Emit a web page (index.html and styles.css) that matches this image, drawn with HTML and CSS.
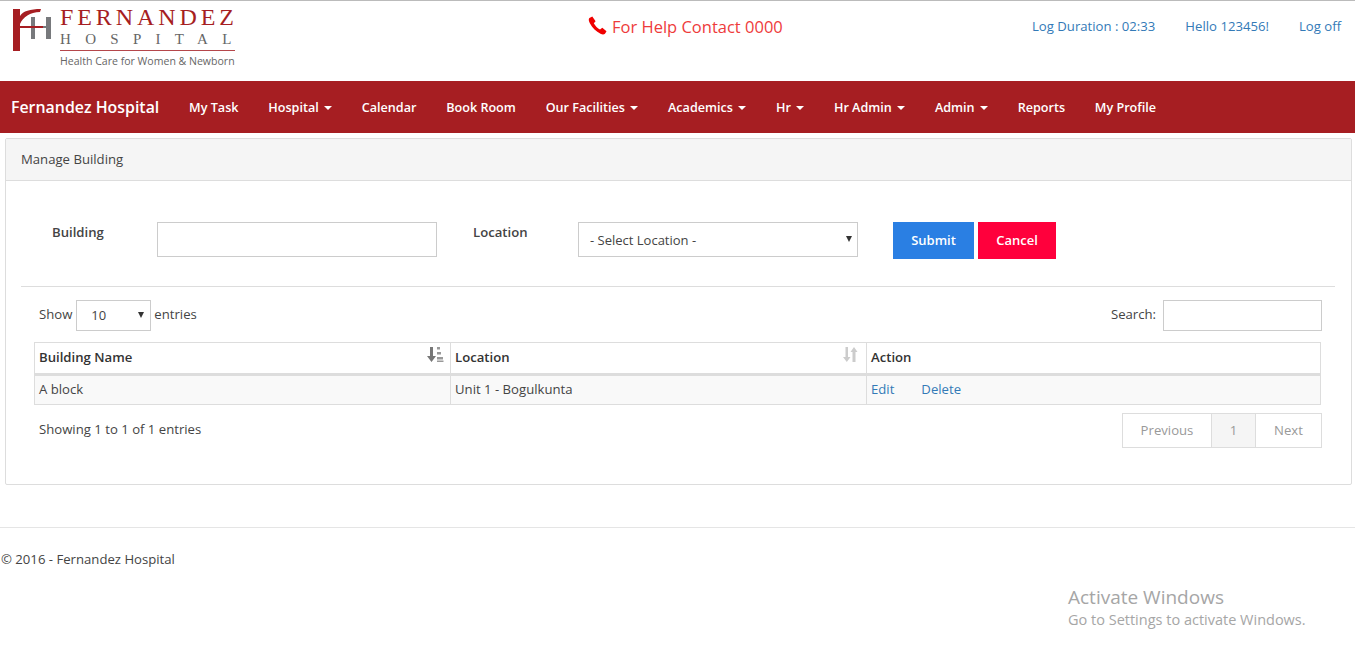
FILE: index.html
```html
<!DOCTYPE html>
<html lang="en">

<head>
    <meta charset="UTF-8">
    <meta name="viewport" content="width=device-width, initial-scale=1.0">
    <title>Manage Building</title>
    <link rel="stylesheet" href="styles.css">
</head>

<body>
    <header class="top">
        <div class="logo">
            <svg class="logo_mark" width="42" height="46" viewBox="0 0 42 46">
                <path d="M19 10H23V32H19ZM34 10H39V32H34ZM23 19H34V21H23Z" fill="#77797c" />
                <path d="M1 2H8V9C11 4 18 2 29 2L28 5C18 5 11 10 8 17V44H1ZM8 19H31V21H8Z" fill="#a61e22" />
            </svg>
            <div class="logo_text">
                <div class="logo_name">FERNANDEZ</div>
                <div class="logo_sub">HOSPITAL</div>
                <div class="logo_tag">Health Care for Women &amp; Newborn</div>
            </div>
        </div>
        <div class="help">
            <svg width="19" height="19" viewBox="0 0 19 19">
                <path d="M4.300 0.600L1.400 2C0.300 3 0.700 5 2 7.500C4.500 12 8 15.500 12.500 17.800C14.500 18.800 16 18.700 17 17.700L18.500 15.300L14.300 11.800L12 13.600C9.800 12.400 7 9.600 5.800 7.200L7.600 5.200Z" fill="#f00000" />
            </svg>
            <span>For Help Contact 0000</span>
        </div>
        <div class="user_links">
            <a href="#">Log Duration : 02:33</a>
            <a href="#">Hello 123456!</a>
            <a href="#">Log off</a>
        </div>
    </header>

    <nav class="navbar">
        <a class="brand" href="#">Fernandez Hospital</a>
        <a href="#">My Task</a>
        <a href="#">Hospital <span class="caret"></span></a>
        <a href="#">Calendar</a>
        <a href="#">Book Room</a>
        <a href="#">Our Facilities <span class="caret"></span></a>
        <a href="#">Academics <span class="caret"></span></a>
        <a href="#">Hr <span class="caret"></span></a>
        <a href="#">Hr Admin <span class="caret"></span></a>
        <a href="#">Admin <span class="caret"></span></a>
        <a href="#">Reports</a>
        <a href="#">My Profile</a>
    </nav>

    <div class="panel">
        <div class="panel_heading">Manage Building</div>
        <div class="panel_body">
            <form class="building_form">
                <label class="label_building">Building</label>
                <input type="text" class="text_input">
                <label class="label_location">Location</label>
                <div class="select_wrap location_select">
                    <select>
                        <option>- Select Location -</option>
                    </select>
                </div>
                <button type="button" class="btn btn_submit">Submit</button>
                <button type="button" class="btn btn_cancel">Cancel</button>
            </form>
            <hr class="divider">
            <div class="table_tools">
                <div class="show_entries">
                    Show
                    <div class="select_wrap length_select">
                        <select>
                            <option>10</option>
                        </select>
                    </div>
                    entries
                </div>
                <div class="search_box">
                    Search:
                    <input type="text" class="search_input">
                </div>
            </div>
            <table class="data_table">
                <thead>
                    <tr>
                        <th class="col_name">Building Name
                            <svg class="sort_icon" width="17" height="17" viewBox="0 0 17 17">
                                <path d="M3 1H6V10H9L4.500 16L0 10H3Z" fill="#777" />
                                <path d="M10 1H13V3.500H10ZM10 6H14V8.500H10ZM10 11H16V13.500H10ZM10 14.500H16.500V16H10Z" fill="#999" />
                            </svg>
                        </th>
                        <th class="col_location">Location
                            <svg class="sort_icon sort_off" width="15" height="17" viewBox="0 0 15 17">
                                <path d="M2.500 1H5V11H7.500L3.800 16L0 11H2.500ZM9.500 16V6H7.500L11 1L14.500 6H12.500V16Z" fill="#ccc" />
                            </svg>
                        </th>
                        <th>Action</th>
                    </tr>
                </thead>
                <tbody>
                    <tr>
                        <td>A block</td>
                        <td>Unit 1 - Bogulkunta</td>
                        <td><a href="#" class="edit_link">Edit</a><a href="#">Delete</a></td>
                    </tr>
                </tbody>
            </table>
            <div class="table_footer">
                <div class="table_info">Showing 1 to 1 of 1 entries</div>
                <div class="pagination">
                    <a href="#" class="page_prev">Previous</a>
                    <a href="#" class="page_current">1</a>
                    <a href="#" class="page_next">Next</a>
                </div>
            </div>
        </div>
    </div>

    <footer class="footer">
        <hr class="footer_line">
        <p>&copy; 2016 - Fernandez Hospital</p>
    </footer>

    <div class="watermark">
        <div class="watermark_title">Activate Windows</div>
        <div>Go to Settings to activate Windows.</div>
    </div>
</body>

</html>
```

FILE: styles.css
```css
* {
    box-sizing: border-box;
}

body {
    margin: 0;
    font-family: "Open Sans", "Liberation Sans", sans-serif;
    font-size: 13.15px;
    color: #444;
    background-color: #fff;
    height: 655px;
    overflow: hidden;
    position: relative;
}

a {
    color: #337ab7;
    text-decoration: none;
}

.top {
    height: 81px;
    border-top: 1px solid #bbb;
    display: flex;
    position: relative;
}

.logo {
    display: flex;
    padding: 6px 0 0 12px;
    width: 480px;
}

.logo_mark {
    flex: none;
}

.logo_text {
    margin-left: 6px;
    width: 175px;
    color: #a61e22;
}

.logo_name {
    font-family: "Liberation Serif", serif;
    font-size: 24px;
    line-height: 20px;
    letter-spacing: 3.900px;
    white-space: nowrap;
}

.logo_sub {
    font-family: "Liberation Serif", serif;
    font-size: 15px;
    line-height: 18px;
    letter-spacing: 14.300px;
    color: #666;
    border-bottom: 1px solid #b5474b;
    height: 24px;
    padding-top: 3px;
    white-space: nowrap;
}

.logo_tag {
    font-size: 10.550px;
    line-height: 14px;
    margin-top: 3px;
    color: #666;
    white-space: nowrap;
}

.help {
    display: flex;
    align-items: center;
    gap: 5px;
    height: 50px;
    margin-left: 108px;
    font-size: 16.500px;
    color: #ee3b3b;
    width: 300px;
}

.help svg {
    margin-top: -2px;
}

.user_links {
    display: flex;
    gap: 30px;
    margin-left: auto;
    padding: 16px 14px 0 0;
    line-height: 18px;
}

.navbar {
    height: 52px;
    background-color: #a61e22;
    display: flex;
    align-items: center;
    padding-left: 11px;
    gap: 29.800px;
}

.navbar a {
    color: #fff;
    font-size: 12.600px;
    font-weight: 600;
    white-space: nowrap;
}

.navbar .brand {
    font-size: 15.900px;
    font-weight: 600;
}

.caret {
    display: inline-block;
    margin-left: 2px;
    vertical-align: middle;
    border-top: 4px solid #fff;
    border-left: 4px solid transparent;
    border-right: 4px solid transparent;
}

.panel {
    margin: 5px 3px 0 5px;
    height: 347px;
    border: 1px solid #ddd;
    border-radius: 2px;
}

.panel_heading {
    height: 42px;
    padding: 0 15px;
    line-height: 41px;
    background-color: #f5f5f5;
    border-bottom: 1px solid #ddd;
}

.panel_body {
    padding: 0 16px 0 15px;
}

.building_form {
    display: flex;
    height: 105px;
    padding-top: 41px;
    align-items: flex-start;
}

.building_form label {
    font-weight: 600;
    padding-top: 1px;
    line-height: 18px;
}

.label_building {
    margin-left: 31px;
    width: 105px;
}

.text_input {
    width: 280px;
    height: 35px;
    border: 1px solid #ccc;
}

.label_location {
    margin-left: 36px;
    width: 105px;
}

.select_wrap {
    position: relative;
}

.select_wrap select {
    width: 100%;
    height: 100%;
    appearance: none;
    background-color: #fff;
    border: 1px solid #ccc;
    font-family: inherit;
    font-size: 13px;
    color: #444;
}

.select_wrap::after {
    content: "";
    position: absolute;
    right: 6px;
    top: 14px;
    border-top: 6px solid #333;
    border-left: 3px solid transparent;
    border-right: 3px solid transparent;
}

.location_select {
    width: 280px;
    height: 35px;
}

.location_select select {
    padding-left: 11px;
}

.btn {
    height: 37px;
    padding: 0 0 2px;
    border: 0;
    color: #fff;
    font-family: inherit;
    font-size: 13px;
    font-weight: 600;
}

.btn_submit {
    width: 81px;
    margin-left: 35px;
    background-color: #2a7fe3;
}

.btn_cancel {
    width: 78px;
    margin-left: 4px;
    background-color: #ff003c;
}

.divider {
    margin: 0;
    border: 0;
    border-top: 1px solid #ddd;
}

.table_tools {
    display: flex;
    justify-content: space-between;
    height: 31px;
    margin: 13px 0 11px;
    padding: 0 13px 0 18px;
    line-height: 28px;
}

.show_entries,
.search_box {
    display: flex;
    align-items: flex-start;
    gap: 3px;
}

.length_select {
    width: 75px;
    height: 31px;
    margin-left: 1px;
}

.length_select select {
    padding: 0 0 2px 14px;
}

.length_select::after {
    right: 7px;
    top: 12px;
}

.search_box {
    gap: 7px;
}

.search_input {
    width: 159px;
    height: 31px;
    border: 1px solid #ccc;
}

.data_table {
    width: 1287px;
    margin-left: 13px;
    border-collapse: collapse;
    table-layout: fixed;
    border: 1px solid #ddd;
}

.data_table th,
.data_table td {
    border-left: 1px solid #ddd;
    padding: 0 4px;
    text-align: left;
}

.data_table th {
    position: relative;
    height: 32px;
    padding-bottom: 2px;
    color: #333;
    font-weight: 600;
    border-bottom: 3px solid #ddd;
}

.data_table td {
    height: 30px;
    padding-bottom: 2px;
    background-color: #f9f9f9;
}

.col_name {
    width: 416px;
}

.col_location {
    width: 416px;
}

.sort_icon {
    position: absolute;
    right: 6px;
    top: 3px;
}

.sort_off {
    right: 8px;
}

.edit_link {
    margin-right: 27px;
}

.table_footer {
    display: flex;
    justify-content: space-between;
    padding: 8px 13px 0 18px;
}

.table_info {
    padding-top: 7px;
}

.pagination {
    display: flex;
    height: 35px;
    border: 1px solid #ddd;
}

.pagination a {
    color: #999;
    line-height: 33px;
    text-align: center;
}

.page_prev {
    width: 88px;
}

.page_current {
    width: 45px;
    background-color: #f5f5f5;
    border-left: 1px solid #ddd;
    border-right: 1px solid #ddd;
}

.page_next {
    width: 65px;
}

.footer {
    padding-top: 42px;
}

.footer_line {
    margin: 0;
    border: 0;
    border-top: 1px solid #e5e5e5;
}

.footer p {
    margin: 22px 0 0 1px;
    line-height: 18px;
}

.watermark {
    position: absolute;
    left: 1068px;
    top: 585px;
    color: #a6a6a6;
    font-size: 14.500px;
    line-height: 20px;
}

.watermark_title {
    font-size: 19px;
    line-height: 25px;
}
```
